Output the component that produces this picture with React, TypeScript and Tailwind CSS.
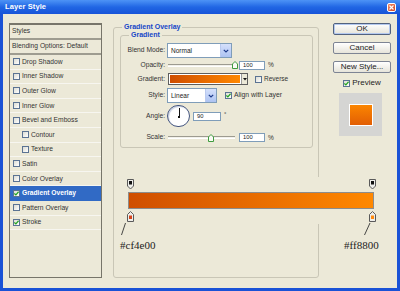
import type { ReactNode } from 'react'

const styleRows = [
  { label: 'Drop Shadow' },
  { label: 'Inner Shadow' },
  { label: 'Outer Glow' },
  { label: 'Inner Glow' },
  { label: 'Bevel and Emboss' },
  { label: 'Contour', sub: true },
  { label: 'Texture', sub: true },
  { label: 'Satin' },
  { label: 'Color Overlay' },
  { label: 'Gradient Overlay', on: true, active: true },
  { label: 'Pattern Overlay' },
  { label: 'Stroke', on: true },
]

function Check({ on }: { on?: boolean }) {
  return (
    <span className="w-[7px] h-[7px] shrink-0 border border-[#5b7393] bg-gradient-to-br from-[#dcdcd4] to-white flex items-center justify-center">
      {on && (
        <svg width="5" height="5" viewBox="0 0 5 5">
          <path d="M0.4 2.4 L1.9 3.9 L4.6 0.8" stroke="#22a322" strokeWidth="1.3" fill="none" />
        </svg>
      )}
    </span>
  )
}

function Chevron() {
  return (
    <svg width="6" height="4" viewBox="0 0 6 4">
      <path d="M0.8 0.8 L3 3 L5.2 0.8" stroke="#1d3a8a" strokeWidth="1.2" fill="none" />
    </svg>
  )
}

function Select({ value, className }: { value: string; className: string }) {
  return (
    <div className={`h-full border border-[#7f9db9] bg-white flex items-center ${className}`}>
      <span className="flex-1 pl-[3px] text-[6.5px] text-[#222]">{value}</span>
      <span className="w-[11px] h-full border-l border-[#b9c9ef] bg-gradient-to-b from-[#d5e0fb] to-[#adc3f2] flex items-center justify-center">
        <Chevron />
      </span>
    </div>
  )
}

function Slider({ pos }: { pos: number }) {
  return (
    <div className="relative w-[67px] h-[8px] ml-[1px] flex items-center">
      <div className="w-full h-[3px] border-t border-[#9d9b90] border-b border-b-white bg-[#f2f1ea]" />
      <svg
        className="absolute top-0"
        style={{ left: pos }}
        width="6"
        height="8"
        viewBox="0 0 6 8"
      >
        <path d="M0.5 7.5 V3 L3 0.5 L5.5 3 V7.5 Z" fill="#fafaf5" stroke="#3f9c3f" />
      </svg>
    </div>
  )
}

function NumBox({ value, className }: { value: string; className: string }) {
  return (
    <span className={`h-[9px] border border-[#7f9db9] bg-white flex items-center pl-[3px] text-[5.8px] text-[#222] ${className}`}>
      {value}
    </span>
  )
}

function Row({ label, className, children }: { label: string; className: string; children: ReactNode }) {
  return (
    <div className={`flex items-center ${className}`}>
      <span className="w-[44px] shrink-0 text-right text-[6.7px] text-[#333]">{label}</span>
      <div className="ml-[2px] h-full flex items-center">{children}</div>
    </div>
  )
}

function Btn({ children, isDefault }: { children: ReactNode; isDefault?: boolean }) {
  return (
    <button
      className={`w-[58px] h-[12px] rounded-[2px] border bg-gradient-to-b from-white to-[#e6e4da] text-[8px] leading-none text-[#222] flex items-center justify-center ${
        isDefault ? 'border-[#52627f] shadow-[inset_0_0_0_1px_#b4c9ef]' : 'border-[#7d8494]'
      }`}
    >
      {children}
    </button>
  )
}

function StopMarker({ x, top, color }: { x: number; top: boolean; color: string }) {
  return top ? (
    <g>
      <path d={`M${x + 0.5} 4.5 H${x + 6.5} V11 L${x + 3.5} 14 L${x + 0.5} 11 Z`} fill="#eeeeea" stroke="#5a5a5a" />
      <rect x={x + 2} y={6} width={3} height={3.5} fill={color} />
    </g>
  ) : (
    <g>
      <path d={`M${x + 0.5} 46.5 H${x + 6.5} V39.5 L${x + 3.5} 36.5 L${x + 0.5} 39.5 Z`} fill="#eeeeea" stroke="#5a5a5a" />
      <rect x={x + 2} y={40.5} width={3} height={3.5} fill={color} />
    </g>
  )
}

export default function App() {
  return (
    <div className="relative w-[400px] h-[291px] flex flex-col bg-[#1a52d6] overflow-hidden font-['Liberation_Sans',Arial,sans-serif]">
      {/* title bar */}
      <div className="h-[14px] shrink-0 flex items-center justify-between pl-[5px] pr-[4px] bg-gradient-to-b from-[#4d93f6] via-[#2166e4] to-[#1753d8]">
        <span className="text-[7.5px] font-bold text-white tracking-[0.1px]">Layer Style</span>
        <span className="w-[9px] h-[9px] rounded-[2px] border border-white bg-gradient-to-br from-[#f08a66] to-[#d2401a] flex items-center justify-center">
          <svg width="5" height="5" viewBox="0 0 5 5">
            <path d="M0.5 0.5 L4.5 4.5 M4.5 0.5 L0.5 4.5" stroke="white" strokeWidth="1.2" />
          </svg>
        </span>
      </div>

      {/* dialog body */}
      <div className="flex-1 mx-[3px] mb-[3px] bg-[#ece9d8] flex pt-[9px] pl-[6px]">
        {/* styles list */}
        <div className="w-[93px] h-[255px] shrink-0 border border-[#77756a] border-t-2 flex flex-col text-[6.7px] text-[#333]">
          <div className="h-[15px] border-b-2 border-[#9e9c90] flex items-center pl-[2px]">Styles</div>
          <div className="h-[15px] border-b-2 border-[#9e9c90] flex items-center pl-[2px]">
            Blending Options: Default
          </div>
          {styleRows.map(row => (
            <div
              key={row.label}
              className={`h-[14.6px] shrink-0 flex items-center gap-[2px] border-b ${
                row.active ? 'bg-[#316ac5] border-[#316ac5] text-white font-bold' : 'border-[#f7f6f0]'
              } ${row.sub ? 'pl-[12px]' : 'pl-[3px]'}`}
            >
              <Check on={row.on} />
              <span>{row.label}</span>
            </div>
          ))}
        </div>

        {/* gradient overlay group */}
        <fieldset className="w-[206px] h-[255px] shrink-0 ml-[11px] border border-[#c9c6b6] rounded-[3px] pl-[6px] pr-[5px]">
          <legend className="ml-[2px] px-[2px] text-[7px] leading-[8px] font-bold text-[#1646c8]">Gradient Overlay</legend>
          <fieldset className="border border-[#c9c6b6] rounded-[3px] pb-[4px]">
            <legend className="ml-[8px] px-[2px] text-[7px] leading-[8px] font-bold text-[#1646c8]">Gradient</legend>
            <Row label="Blend Mode:" className="h-[15px] mt-[4px]">
              <Select value="Normal" className="w-[65px]" />
            </Row>
            <Row label="Opacity:" className="h-[10px] mt-[2px]">
              <Slider pos={64} />
              <NumBox value="100" className="w-[26px] ml-[4px]" />
              <span className="ml-[3px] text-[6.5px] text-[#333]">%</span>
            </Row>
            <Row label="Gradient:" className="h-[12px] mt-[3px]">
              <div className="w-[80px] h-full ml-[1px] border border-[#5e5e5e] bg-white flex">
                <div className="flex-1 m-[1px] bg-gradient-to-r from-[#cf4e00] to-[#ff8800]" />
                <div className="w-[6px] border-l border-[#9a9a9a] bg-[#ece9d8] flex items-center justify-center">
                  <svg width="4" height="3" viewBox="0 0 4 3">
                    <path d="M0 0 H4 L2 2.5 Z" fill="#111" />
                  </svg>
                </div>
              </div>
              <span className="ml-[7px]">
                <Check />
              </span>
              <span className="ml-[2px] text-[6.5px] text-[#333]">Reverse</span>
            </Row>
            <Row label="Style:" className="h-[15px] mt-[3px]">
              <Select value="Linear" className="w-[50px]" />
              <span className="ml-[8px]">
                <Check on />
              </span>
              <span className="ml-[2px] text-[6.8px] text-[#333]">Align with Layer</span>
            </Row>
            <Row label="Angle:" className="h-[22px] mt-[2px]">
              <div className="relative w-[23px] h-[22px] rounded-full border border-[#44557f] bg-white shadow-[inset_1px_1px_1px_#c7cfe0]">
                <span className="absolute left-[10.5px] top-[2px] w-px h-[9px] bg-[#111]" />
                <span className="absolute left-[9.5px] top-[9.5px] w-[2px] h-[2px] bg-[#111]" />
              </div>
              <NumBox value="90" className="w-[28px] ml-[3px]" />
              <span className="ml-[3px] self-start mt-[6px] text-[6px] leading-none text-[#333]">°</span>
            </Row>
            <Row label="Scale:" className="h-[11px] mt-[5px]">
              <Slider pos={40} />
              <NumBox value="100" className="w-[26px] ml-[4px]" />
              <span className="ml-[3px] text-[6.5px] text-[#333]">%</span>
            </Row>
          </fieldset>
        </fieldset>

        {/* buttons column */}
        <div className="w-[58px] ml-[14px] flex flex-col">
          <Btn isDefault>OK</Btn>
          <div className="mt-[7px]">
            <Btn>Cancel</Btn>
          </div>
          <div className="mt-[7px]">
            <Btn>New Style...</Btn>
          </div>
          <div className="mt-[5px] h-[10px] flex items-center justify-center gap-[2px] text-[8px] text-[#222]">
            <Check on />
            <span>Preview</span>
          </div>
          <div className="mt-[5px] ml-[6px] w-[43px] h-[43px] bg-[#d5d5d3] flex items-center justify-center">
            <div className="w-[24px] h-[22px] border border-white bg-gradient-to-b from-[#fb8500] to-[#e25e04]" />
          </div>
        </div>
      </div>

      {/* annotation laid over the dialog */}
      <div className="absolute left-[116px] top-[177px] w-[272px] h-[47px] bg-[#ece9d8]" />
      <div className="absolute left-[128px] top-[192px] w-[246px] h-[17px] border border-[#8c8c8c] bg-gradient-to-r from-[#cf4e00] to-[#ff8800]" />
      <svg className="absolute left-[115px] top-[175px]" width="270" height="65" viewBox="0 0 270 65">
        <StopMarker x={12} top color="#111" />
        <StopMarker x={254} top color="#111" />
        <StopMarker x={12} top={false} color="#d6441a" />
        <StopMarker x={254} top={false} color="#ff8a10" />
        <line x1="10.5" y1="48" x2="6.5" y2="60" stroke="#333" strokeWidth="0.9" />
        <line x1="255" y1="48" x2="249.5" y2="60" stroke="#333" strokeWidth="0.9" />
      </svg>
      <span className="absolute left-[120px] top-[239px] text-[11px] leading-[12px] text-[#222] font-['Liberation_Serif','Times_New_Roman',serif]">
        #cf4e00
      </span>
      <span className="absolute left-[344px] top-[239px] text-[11px] leading-[12px] text-[#222] font-['Liberation_Serif','Times_New_Roman',serif]">
        #ff8800
      </span>
    </div>
  )
}
